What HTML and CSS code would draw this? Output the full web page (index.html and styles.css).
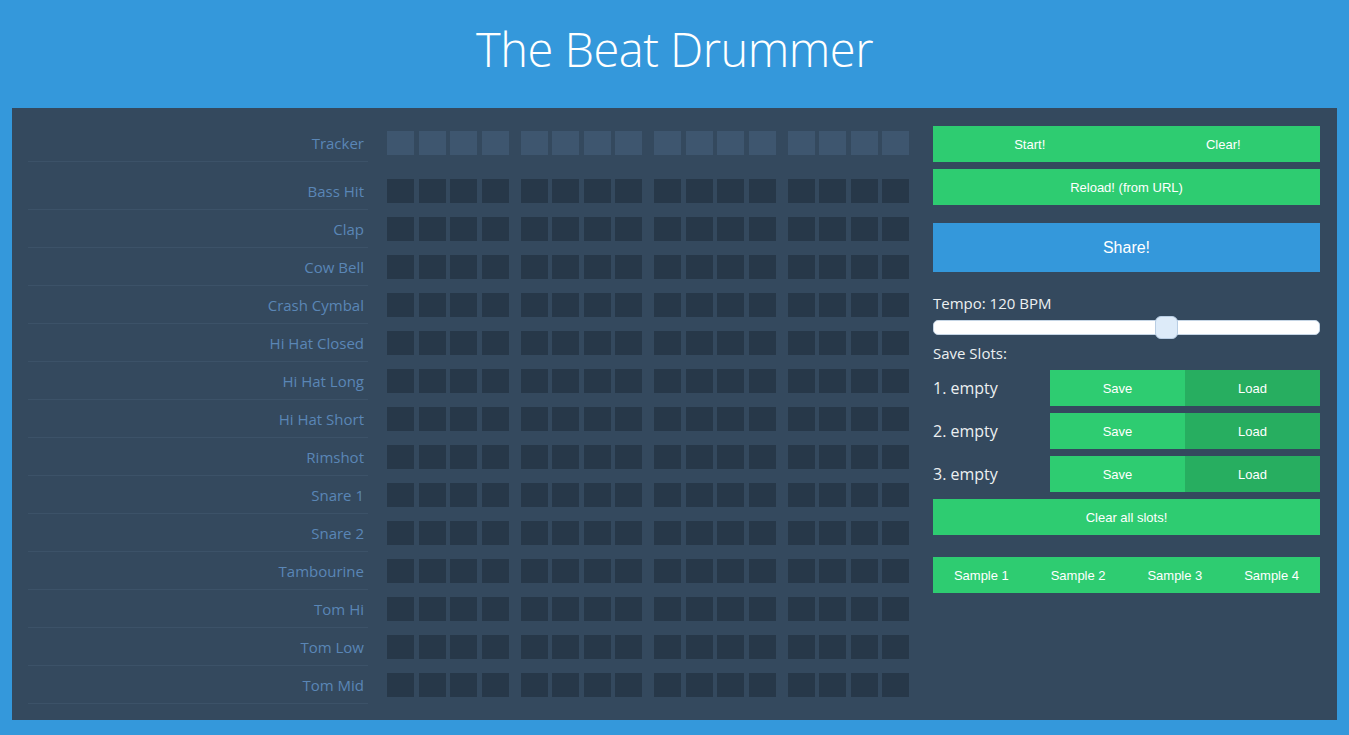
FILE: index.html
```html
<!DOCTYPE html>
<html>
<head>
<meta charset="utf-8">
<title>The Beat Drummer</title>
<link rel="stylesheet" href="styles.css">
</head>
<body>
<header class="site-header">
  <h1 class="title">The Beat Drummer</h1>
</header>
<main class="panel">
  <section class="sequencer">
    <div class="row tracker-row">
      <div class="label">Tracker</div>
      <div class="cells">
        <div class="group"><span class="cell"></span><span class="cell"></span><span class="cell"></span><span class="cell"></span></div>
        <div class="group"><span class="cell"></span><span class="cell"></span><span class="cell"></span><span class="cell"></span></div>
        <div class="group"><span class="cell"></span><span class="cell"></span><span class="cell"></span><span class="cell"></span></div>
        <div class="group"><span class="cell"></span><span class="cell"></span><span class="cell"></span><span class="cell"></span></div>
      </div>
    </div>
    <div class="row"><div class="label">Bass Hit</div><div class="cells"><div class="group"><span class="cell"></span><span class="cell"></span><span class="cell"></span><span class="cell"></span></div><div class="group"><span class="cell"></span><span class="cell"></span><span class="cell"></span><span class="cell"></span></div><div class="group"><span class="cell"></span><span class="cell"></span><span class="cell"></span><span class="cell"></span></div><div class="group"><span class="cell"></span><span class="cell"></span><span class="cell"></span><span class="cell"></span></div></div></div>
    <div class="row"><div class="label">Clap</div><div class="cells"><div class="group"><span class="cell"></span><span class="cell"></span><span class="cell"></span><span class="cell"></span></div><div class="group"><span class="cell"></span><span class="cell"></span><span class="cell"></span><span class="cell"></span></div><div class="group"><span class="cell"></span><span class="cell"></span><span class="cell"></span><span class="cell"></span></div><div class="group"><span class="cell"></span><span class="cell"></span><span class="cell"></span><span class="cell"></span></div></div></div>
    <div class="row"><div class="label">Cow Bell</div><div class="cells"><div class="group"><span class="cell"></span><span class="cell"></span><span class="cell"></span><span class="cell"></span></div><div class="group"><span class="cell"></span><span class="cell"></span><span class="cell"></span><span class="cell"></span></div><div class="group"><span class="cell"></span><span class="cell"></span><span class="cell"></span><span class="cell"></span></div><div class="group"><span class="cell"></span><span class="cell"></span><span class="cell"></span><span class="cell"></span></div></div></div>
    <div class="row"><div class="label">Crash Cymbal</div><div class="cells"><div class="group"><span class="cell"></span><span class="cell"></span><span class="cell"></span><span class="cell"></span></div><div class="group"><span class="cell"></span><span class="cell"></span><span class="cell"></span><span class="cell"></span></div><div class="group"><span class="cell"></span><span class="cell"></span><span class="cell"></span><span class="cell"></span></div><div class="group"><span class="cell"></span><span class="cell"></span><span class="cell"></span><span class="cell"></span></div></div></div>
    <div class="row"><div class="label">Hi Hat Closed</div><div class="cells"><div class="group"><span class="cell"></span><span class="cell"></span><span class="cell"></span><span class="cell"></span></div><div class="group"><span class="cell"></span><span class="cell"></span><span class="cell"></span><span class="cell"></span></div><div class="group"><span class="cell"></span><span class="cell"></span><span class="cell"></span><span class="cell"></span></div><div class="group"><span class="cell"></span><span class="cell"></span><span class="cell"></span><span class="cell"></span></div></div></div>
    <div class="row"><div class="label">Hi Hat Long</div><div class="cells"><div class="group"><span class="cell"></span><span class="cell"></span><span class="cell"></span><span class="cell"></span></div><div class="group"><span class="cell"></span><span class="cell"></span><span class="cell"></span><span class="cell"></span></div><div class="group"><span class="cell"></span><span class="cell"></span><span class="cell"></span><span class="cell"></span></div><div class="group"><span class="cell"></span><span class="cell"></span><span class="cell"></span><span class="cell"></span></div></div></div>
    <div class="row"><div class="label">Hi Hat Short</div><div class="cells"><div class="group"><span class="cell"></span><span class="cell"></span><span class="cell"></span><span class="cell"></span></div><div class="group"><span class="cell"></span><span class="cell"></span><span class="cell"></span><span class="cell"></span></div><div class="group"><span class="cell"></span><span class="cell"></span><span class="cell"></span><span class="cell"></span></div><div class="group"><span class="cell"></span><span class="cell"></span><span class="cell"></span><span class="cell"></span></div></div></div>
    <div class="row"><div class="label">Rimshot</div><div class="cells"><div class="group"><span class="cell"></span><span class="cell"></span><span class="cell"></span><span class="cell"></span></div><div class="group"><span class="cell"></span><span class="cell"></span><span class="cell"></span><span class="cell"></span></div><div class="group"><span class="cell"></span><span class="cell"></span><span class="cell"></span><span class="cell"></span></div><div class="group"><span class="cell"></span><span class="cell"></span><span class="cell"></span><span class="cell"></span></div></div></div>
    <div class="row"><div class="label">Snare 1</div><div class="cells"><div class="group"><span class="cell"></span><span class="cell"></span><span class="cell"></span><span class="cell"></span></div><div class="group"><span class="cell"></span><span class="cell"></span><span class="cell"></span><span class="cell"></span></div><div class="group"><span class="cell"></span><span class="cell"></span><span class="cell"></span><span class="cell"></span></div><div class="group"><span class="cell"></span><span class="cell"></span><span class="cell"></span><span class="cell"></span></div></div></div>
    <div class="row"><div class="label">Snare 2</div><div class="cells"><div class="group"><span class="cell"></span><span class="cell"></span><span class="cell"></span><span class="cell"></span></div><div class="group"><span class="cell"></span><span class="cell"></span><span class="cell"></span><span class="cell"></span></div><div class="group"><span class="cell"></span><span class="cell"></span><span class="cell"></span><span class="cell"></span></div><div class="group"><span class="cell"></span><span class="cell"></span><span class="cell"></span><span class="cell"></span></div></div></div>
    <div class="row"><div class="label">Tambourine</div><div class="cells"><div class="group"><span class="cell"></span><span class="cell"></span><span class="cell"></span><span class="cell"></span></div><div class="group"><span class="cell"></span><span class="cell"></span><span class="cell"></span><span class="cell"></span></div><div class="group"><span class="cell"></span><span class="cell"></span><span class="cell"></span><span class="cell"></span></div><div class="group"><span class="cell"></span><span class="cell"></span><span class="cell"></span><span class="cell"></span></div></div></div>
    <div class="row"><div class="label">Tom Hi</div><div class="cells"><div class="group"><span class="cell"></span><span class="cell"></span><span class="cell"></span><span class="cell"></span></div><div class="group"><span class="cell"></span><span class="cell"></span><span class="cell"></span><span class="cell"></span></div><div class="group"><span class="cell"></span><span class="cell"></span><span class="cell"></span><span class="cell"></span></div><div class="group"><span class="cell"></span><span class="cell"></span><span class="cell"></span><span class="cell"></span></div></div></div>
    <div class="row"><div class="label">Tom Low</div><div class="cells"><div class="group"><span class="cell"></span><span class="cell"></span><span class="cell"></span><span class="cell"></span></div><div class="group"><span class="cell"></span><span class="cell"></span><span class="cell"></span><span class="cell"></span></div><div class="group"><span class="cell"></span><span class="cell"></span><span class="cell"></span><span class="cell"></span></div><div class="group"><span class="cell"></span><span class="cell"></span><span class="cell"></span><span class="cell"></span></div></div></div>
    <div class="row"><div class="label">Tom Mid</div><div class="cells"><div class="group"><span class="cell"></span><span class="cell"></span><span class="cell"></span><span class="cell"></span></div><div class="group"><span class="cell"></span><span class="cell"></span><span class="cell"></span><span class="cell"></span></div><div class="group"><span class="cell"></span><span class="cell"></span><span class="cell"></span><span class="cell"></span></div><div class="group"><span class="cell"></span><span class="cell"></span><span class="cell"></span><span class="cell"></span></div></div></div>
  </section>
  <aside class="controls">
    <div class="btn-row first">
      <button class="btn">Start!</button>
      <button class="btn">Clear!</button>
    </div>
    <button class="btn full reload">Reload! (from URL)</button>
    <button class="btn full share">Share!</button>
    <div class="tempo-label">Tempo: 120 BPM</div>
    <input class="tempo" type="range" min="40" max="171" value="120">
    <div class="slots-label">Save Slots:</div>
    <div class="slot">
      <span class="slot-name">1. empty</span>
      <div class="slot-btns"><button class="btn">Save</button><button class="btn dark">Load</button></div>
    </div>
    <div class="slot">
      <span class="slot-name">2. empty</span>
      <div class="slot-btns"><button class="btn">Save</button><button class="btn dark">Load</button></div>
    </div>
    <div class="slot">
      <span class="slot-name">3. empty</span>
      <div class="slot-btns"><button class="btn">Save</button><button class="btn dark">Load</button></div>
    </div>
    <button class="btn full clear-all">Clear all slots!</button>
    <div class="btn-row samples">
      <button class="btn">Sample 1</button>
      <button class="btn">Sample 2</button>
      <button class="btn">Sample 3</button>
      <button class="btn">Sample 4</button>
    </div>
  </aside>
</main>
</body>
</html>
```

FILE: styles.css
```css
* { box-sizing: border-box; }

body {
  margin: 0;
  background: #3498db;
  font-family: "Open Sans", "Noto Sans", sans-serif;
  color: #ecf0f1;
}

.site-header {
  height: 108px;
  display: flex;
  justify-content: center;
}

.title {
  margin: 0;
  padding-top: 19px;
  font-family: "Open Sans", sans-serif;
  font-weight: 300;
  font-size: 47px;
  line-height: 60px;
  color: #ffffff;
  letter-spacing: -0.5px;
}

.panel {
  margin: 0 12px;
  height: 612px;
  background: #34495e;
  padding: 16px 17px 16px 16px;
  display: flex;
}

.sequencer {
  display: flex;
  flex-direction: column;
}

.row {
  display: flex;
  align-items: flex-start;
}

.tracker-row {
  margin-bottom: 10px;
}

.label {
  width: 340px;
  height: 38px;
  border-bottom: 1px solid #3c5268;
  text-align: right;
  padding-right: 4px;
  padding-top: 1px;
  font-size: 15px;
  line-height: 36px;
  color: #5a86b6;
}

.cells {
  margin-left: 19px;
  margin-top: 7px;
  display: flex;
  gap: 12px;
}

.group {
  display: flex;
  gap: 4.5px;
}

.cell {
  display: block;
  width: 27px;
  height: 24px;
  background: #273849;
}

.tracker-row .cell {
  background: #3e566f;
}

.controls {
  width: 387px;
  margin-left: auto;
  display: flex;
  flex-direction: column;
  padding-top: 2px;
}

.btn {
  border: 0;
  margin: 0;
  padding: 0;
  height: 36px;
  background: #2ecc71;
  color: #ffffff;
  font-family: "Liberation Sans", Arial, sans-serif;
  font-size: 13px;
  cursor: pointer;
}

.btn.dark {
  background: #27ae60;
}

.btn-row {
  display: flex;
}

.btn-row .btn {
  flex: 1;
}

.full {
  width: 100%;
}

.reload {
  margin-top: 7px;
}

.share {
  margin-top: 18px;
  height: 49px;
  background: #3498db;
  font-size: 16px;
}

.tempo-label {
  margin-top: 21px;
  font-size: 15px;
  line-height: 20px;
}

.tempo {
  -webkit-appearance: none;
  appearance: none;
  width: 100%;
  height: 23px;
  margin: 3px 0 0 0;
  background: transparent;
}

.tempo::-webkit-slider-runnable-track {
  height: 15px;
  background: #ffffff;
  border: 1px solid #c5d5e5;
  border-radius: 5px;
}

.tempo::-webkit-slider-thumb {
  -webkit-appearance: none;
  width: 23px;
  height: 23px;
  margin-top: -5px;
  background: #ddebf9;
  border: 1px solid #b8cde3;
  border-radius: 6px;
}

.slots-label {
  margin-top: 4px;
  font-size: 15px;
  line-height: 20px;
}

.slot {
  margin-top: 7px;
  display: flex;
  align-items: center;
}

.slot-name {
  width: 117px;
  font-size: 16px;
}

.slot-btns {
  flex: 1;
  display: flex;
}

.slot-btns .btn {
  flex: 1;
}

.clear-all {
  margin-top: 7px;
}

.samples {
  margin-top: 22px;
}
```
